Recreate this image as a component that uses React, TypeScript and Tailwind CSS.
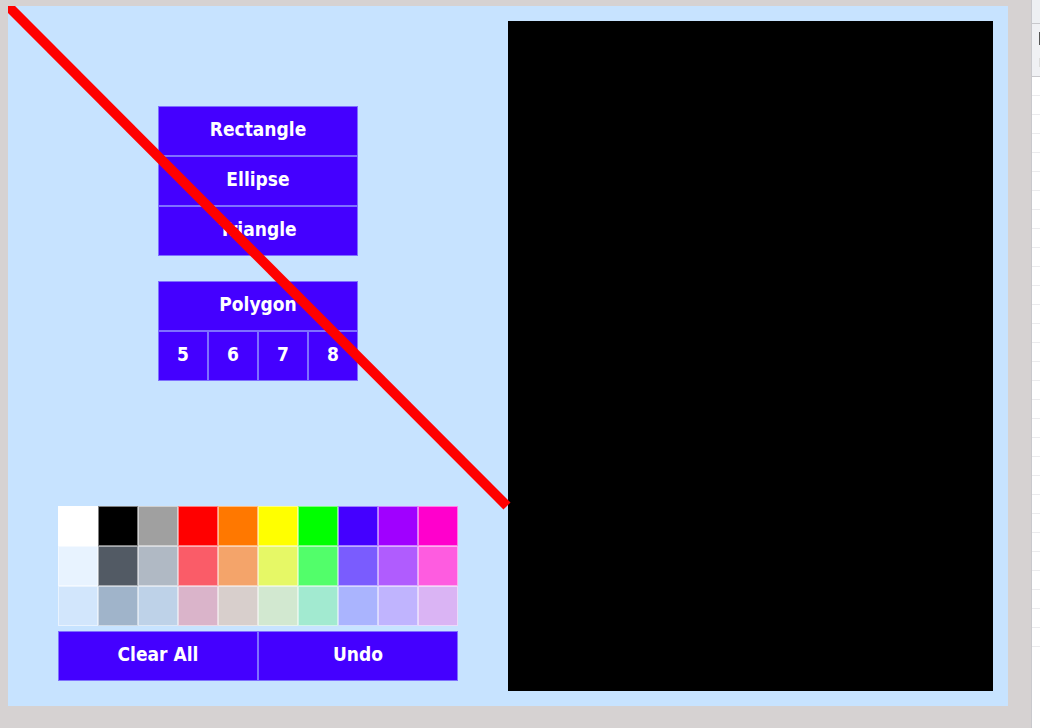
import React from "react";

const palette = [
  ["#ffffff", "#000000", "#a0a0a0", "#ff0000", "#ff7800", "#ffff00", "#00ff00", "#4400ff", "#a000ff", "#ff00cc"],
  ["#e8f3ff", "#525a64", "#b0b9c4", "#fa5c68", "#f4a46a", "#e6f866", "#52fe6a", "#7a5cfe", "#b05cfe", "#fe5ce0"],
  ["#d2e6fc", "#a0b4ca", "#bed2e8", "#dab4ca", "#d8cfcc", "#d2e8d0", "#a2ead0", "#aab4fe", "#c0b4fe", "#dab4f4"],
];

const btn =
  "flex items-center justify-center pb-[3px] bg-[#4400ff] border border-[#7f70ff] text-white font-bold text-[19px]";

export default function App() {
  return (
    <div
      className="flex w-full h-[728px] bg-[#d6d2d2] overflow-hidden"
      style={{ fontFamily: "'DejaVu Sans Condensed', 'DejaVu Sans', sans-serif" }}
    >
      <div className="relative ml-[8px] mt-[6px] w-[1000px] h-[700px] bg-[#c7e3ff] flex overflow-hidden">
        <div className="w-[500px] h-full flex flex-col">
          <div className="ml-[150px] mt-[100px] w-[200px] flex flex-col">
            <div className={`${btn} h-[50px]`}>Rectangle</div>
            <div className={`${btn} h-[50px]`}>Ellipse</div>
            <div className={`${btn} h-[50px]`}>Triangle</div>
          </div>
          <div className="ml-[150px] mt-[25px] w-[200px] flex flex-col">
            <div className={`${btn} h-[50px]`}>Polygon</div>
            <div className="grid grid-cols-4">
              {["5", "6", "7", "8"].map((n) => (
                <div key={n} className={`${btn} h-[50px]`}>
                  {n}
                </div>
              ))}
            </div>
          </div>
          <div className="ml-[50px] mt-[125px] w-[400px] grid grid-cols-10">
            {palette.flat().map((c, i) => (
              <div
                key={i}
                className="h-[40px] border border-white/50"
                style={{ backgroundColor: c }}
              />
            ))}
          </div>
          <div className="ml-[50px] mt-[5px] w-[400px] grid grid-cols-2">
            <div className={`${btn} h-[50px]`}>Clear All</div>
            <div className={`${btn} h-[50px]`}>Undo</div>
          </div>
        </div>
        <div className="mt-[15px] w-[485px] h-[670px] bg-black" />
        <svg
          className="absolute left-0 top-0 pointer-events-none"
          width="1000"
          height="700"
        >
          <line x1="0" y1="0" x2="499" y2="500" stroke="#ff0000" strokeWidth="10" />
        </svg>
      </div>
      <div className="ml-auto w-[9px] h-full border-l border-[#c8c8cc] flex flex-col bg-white">
        <div className="h-[24px] bg-[#eef0f3] border-b border-[#c8c8cc]" />
        <div className="h-[53px] bg-[#f0f1f4] border-b border-[#c8c8cc] relative">
          <div className="absolute left-[7px] top-[8px] w-[2px] h-[13px] bg-[#555]" />
          <div className="absolute left-[7px] top-[34px] w-[1px] h-[9px] bg-[#ddd]" />
        </div>
        {Array.from({ length: 30 }).map((_, i) => (
          <div key={i} className="h-[19px] border-b border-[#ececee] shrink-0" />
        ))}
      </div>
    </div>
  );
}
